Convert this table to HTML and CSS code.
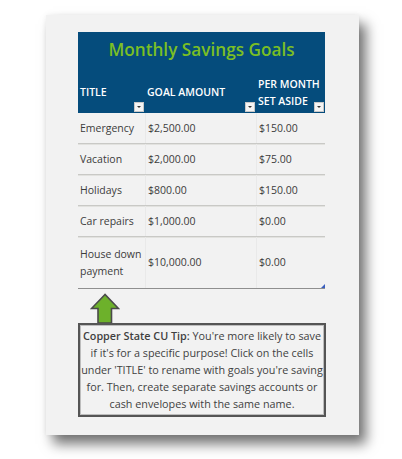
FILE: index.html
```html
<!DOCTYPE html>
<html>
<head>
<meta charset="utf-8">
<link rel="stylesheet" href="styles.css">
</head>
<body>
<div class="card">
  <div class="sheet">
    <div class="head">
      <div class="title">Monthly Savings Goals</div>
      <div class="cols">
        <div class="hcell">TITLE<span class="dd"></span></div>
        <div class="hcell">GOAL AMOUNT<span class="dd"></span></div>
        <div class="hcell">PER MONTH<br>SET ASIDE<span class="dd"></span></div>
      </div>
    </div>
    <div class="row"><div class="cell">Emergency</div><div class="cell">$2,500.00</div><div class="cell">$150.00</div></div>
    <div class="row"><div class="cell">Vacation</div><div class="cell">$2,000.00</div><div class="cell">$75.00</div></div>
    <div class="row"><div class="cell">Holidays</div><div class="cell">$800.00</div><div class="cell">$150.00</div></div>
    <div class="row"><div class="cell">Car repairs</div><div class="cell">$1,000.00</div><div class="cell">$0.00</div></div>
    <div class="row row-tall last"><div class="cell">House down<br>payment</div><div class="cell">$10,000.00</div><div class="cell">$0.00</div></div>
    <span class="corner"></span>
  </div>
  <svg class="arrow" width="30" height="30" viewBox="0 0 30 30">
    <path d="M15 1.5 L1.5 15.5 L8 15.5 L8 30 L21.5 30 L21.5 15.5 L28.5 15.5 Z" fill="#6db12b" stroke="#4a4a4a" stroke-width="1.6" stroke-linejoin="miter"/>
  </svg>
  <div class="tip">
    <b>Copper State CU Tip:</b> You're more likely to save<br>
    if it's for a specific purpose! Click on the cells<br>
    under 'TITLE' to rename with goals you're saving<br>
    for. Then, create separate savings accounts or<br>
    cash envelopes with the same name.
  </div>
</div>
</body>
</html>
```
FILE: styles.css
```css
html, body {
  margin: 0;
  padding: 0;
  background: #ffffff;
}
body {
  font-family: "Open Sans", "Liberation Sans", sans-serif;
  width: 402px;
  height: 459px;
  overflow: hidden;
}
.card {
  margin: 15px 0 0 46px;
  width: 313px;
  height: 420px;
  box-sizing: border-box;
  background: #f2f2f2;
  padding: 17px 0 0 32px;
  box-shadow: 7px 9px 12px rgba(0, 0, 0, 0.55), 0 0 5px rgba(0, 0, 0, 0.06);
  display: flex;
  flex-direction: column;
}
.sheet {
  width: 247px;
  position: relative;
}
.head {
  background: #054c7c;
  color: #ffffff;
}
.title {
  height: 40px;
  box-sizing: border-box;
  padding-top: 6px;
  text-align: center;
  color: #7bbf24;
  font-size: 17.2px;
  font-weight: 600;
  line-height: 24px;
}
.cols, .row {
  display: grid;
  grid-template-columns: 67px 111px 69px;
}
.hcell {
  position: relative;
  height: 41px;
  box-sizing: border-box;
  padding-left: 2px;
  display: flex;
  align-items: center;
  font-size: 10.5px;
  font-weight: 600;
  line-height: 17px;
}
.dd {
  position: absolute;
  right: 1px;
  bottom: 1px;
  width: 10px;
  height: 10px;
  box-sizing: border-box;
  background: #f4f4f4;
  border: 1px solid #c8c8c8;
}
.dd::after {
  content: "";
  position: absolute;
  left: 2px;
  top: 3px;
  border-left: 2px solid transparent;
  border-right: 2px solid transparent;
  border-top: 2px solid #333;
}
.row {
  border-bottom: 1px solid #c9c9c6;
  box-shadow: 0 1px 0 #e2e2df;
  color: #3c3c3c;
  font-size: 10.5px;
  line-height: 17px;
}
.cell {
  height: 30px;
  padding-left: 2px;
  display: flex;
  align-items: center;
  border-left: 1px solid #e9e9e9;
}
.cell:first-child {
  border-left: none;
}
.row-tall .cell {
  height: 51px;
}
.row.last {
  border-bottom: 1px solid #8f8f8f;
  box-shadow: none;
}
.corner {
  position: absolute;
  right: 0;
  bottom: 1px;
  width: 0;
  height: 0;
  border-left: 4px solid transparent;
  border-bottom: 4px solid #3a5fbf;
}
.arrow {
  display: block;
  margin: 4px 0 0 12px;
}
.tip {
  width: 248px;
  box-sizing: border-box;
  border: 2px solid #555555;
  box-shadow: inset 0 0 0 1px #bdbdbd;
  padding: 2px 0 3px;
  text-align: center;
  color: #3f3f3f;
  font-size: 10.8px;
  line-height: 17px;
  white-space: nowrap;
}
.tip b {
  font-weight: 600;
}
```
